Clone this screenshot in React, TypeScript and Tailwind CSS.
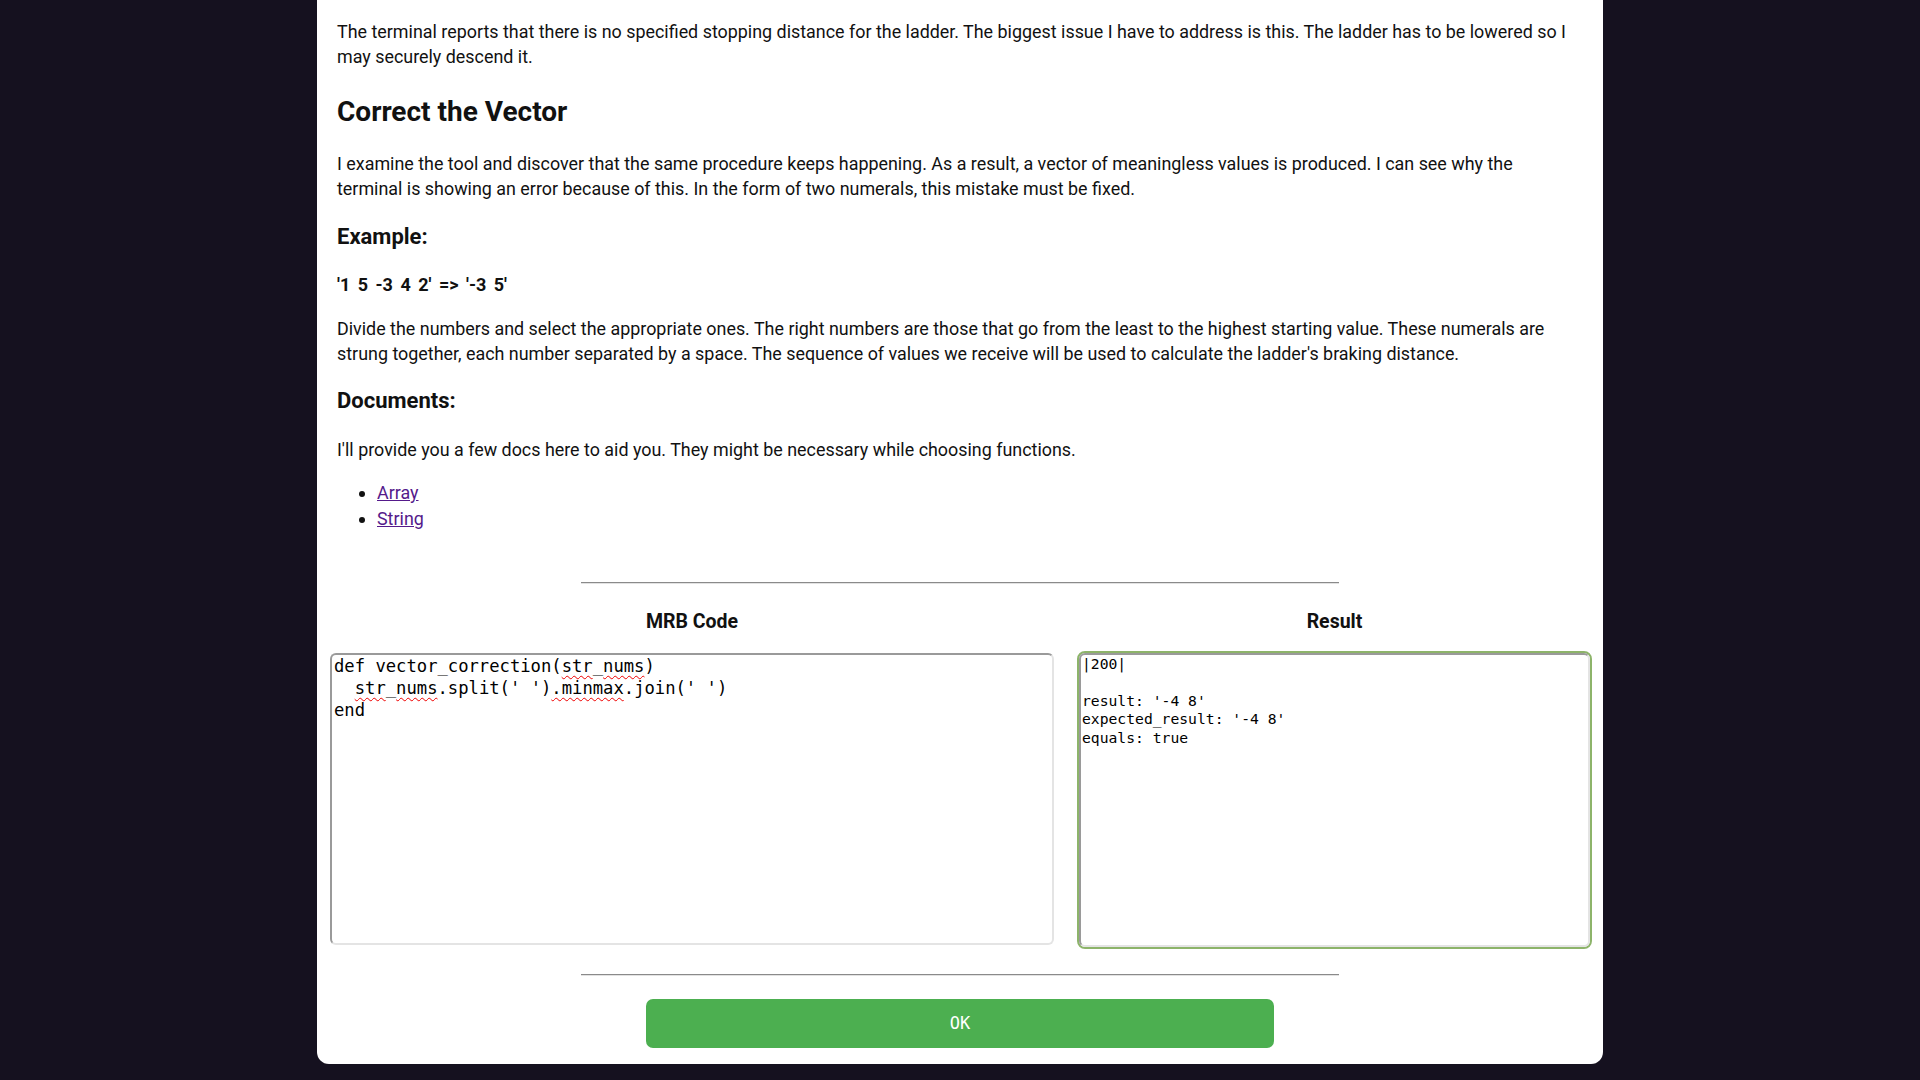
import React from "react";

const sq = "underline decoration-wavy decoration-[#e00] decoration-1 underline-offset-[3px]";

export default function App() {
  return (
    <div className="min-h-screen w-full bg-[#15111f] flex justify-center">
      <div className="w-[1286px] bg-white rounded-b-[12px] mb-[16px] pb-[16px] text-[#111] font-['Roboto',sans-serif] self-start">
        <div className="pl-[20px] pr-[30px] pt-[20px]">
          <p className="text-[17.9px] leading-[24.5px]">
            The terminal reports that there is no specified stopping distance for the ladder. The biggest issue I have to address is this. The ladder has to be lowered so I may securely descend it.
          </p>
          <h2 className="mt-[26px] text-[28px] leading-[34px] font-bold">Correct the Vector</h2>
          <p className="mt-[23px] text-[17.9px] leading-[24.5px]">
            I examine the tool and discover that the same procedure keeps happening. As a result, a vector of meaningless values is produced. I can see why the terminal is showing an error because of this. In the form of two numerals, this mistake must be fixed.
          </p>
          <h3 className="mt-[23px] text-[22px] leading-[26px] font-bold">Example:</h3>
          <p className="mt-[23px] text-[18px] leading-[24px] font-bold [word-spacing:3px]">'1 5 -3 4 2' =&gt; '-3 5'</p>
          <p className="mt-[20px] text-[17.9px] leading-[24.5px]">
            Divide the numbers and select the appropriate ones. The right numbers are those that go from the least to the highest starting value. These numerals are strung together, each number separated by a space. The sequence of values we receive will be used to calculate the ladder's braking distance.
          </p>
          <h3 className="mt-[22px] text-[22px] leading-[26px] font-bold">Documents:</h3>
          <p className="mt-[24px] text-[17.9px] leading-[24.5px]">
            I'll provide you a few docs here to aid you. They might be necessary while choosing functions.
          </p>
          <ul className="mt-[17.5px] pl-[40px] list-disc text-[17.9px] leading-[25.5px]">
            <li>
              <a href="#" className="text-[#551a8b] underline">Array</a>
            </li>
            <li>
              <a href="#" className="text-[#551a8b] underline">String</a>
            </li>
          </ul>
        </div>

        <div className="mt-[50.5px] w-[758px] mx-auto h-[2px] border-t border-t-[#8a8a8a] border-b border-b-[#e2e2e2]" />

        <div className="flex pl-[13px] mt-[26.5px] gap-[23px]">
          <div className="w-[724px] flex flex-col items-center">
            <div className="text-[19.5px] leading-[24px] font-bold">MRB Code</div>
            <div className="mt-[19px] w-[724px] h-[292px] rounded-[6px] border-2 border-t-[#9a9a9a] border-l-[#9a9a9a] border-b-[#e4e4e4] border-r-[#e4e4e4] px-[2px] font-['DejaVu_Sans_Mono',monospace] text-[17.2px] leading-[22px] whitespace-pre text-black">
              <div>def vector_correction(<span className={sq}>str</span>_<span className={sq}>nums</span>)</div>
              <div>  <span className={sq}>str</span>_<span className={sq}>nums</span>.split(' ')<span className={sq}>.minmax</span>.join(' ')</div>
              <div>end</div>
            </div>
          </div>
          <div className="w-[515px] flex flex-col items-center">
            <div className="text-[19.5px] leading-[24px] font-bold">Result</div>
            <div className="mt-[17px] w-[515px] h-[298px] rounded-[8px] border-2 border-[#8db46a]">
              <div className="w-full h-full rounded-[6px] border-2 border-t-[#9a9a9a] border-l-[#9a9a9a] border-b-[#e4e4e4] border-r-[#e4e4e4] px-[1px] font-['DejaVu_Sans_Mono',monospace] text-[14.7px] leading-[18.4px] whitespace-pre text-black">
                {"|200|\n\nresult: '-4 8'\nexpected_result: '-4 8'\nequals: true"}
              </div>
            </div>
          </div>
        </div>

        <div className="mt-[25px] w-[758px] mx-auto h-[2px] border-t border-t-[#8a8a8a] border-b border-b-[#e2e2e2]" />

        <button className="mt-[23px] mx-auto block w-[628px] h-[49px] rounded-[7px] bg-[#4caf50] text-white font-['DejaVu_Sans_Mono',monospace] text-[17px]">
          OK
        </button>
      </div>
    </div>
  );
}
